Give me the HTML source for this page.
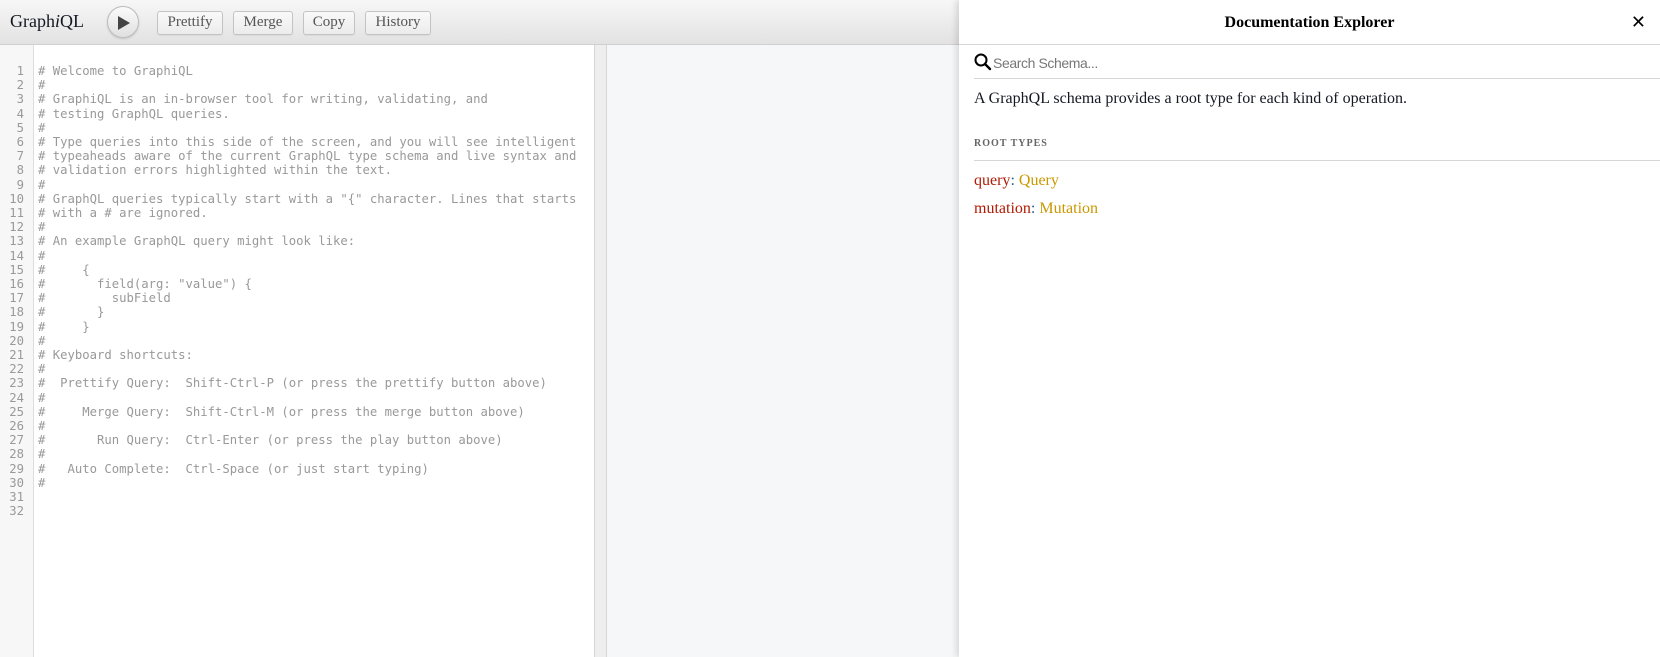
<!DOCTYPE html>
<html><head><meta charset="utf-8"><style>
*{box-sizing:border-box;margin:0;padding:0}
body{width:1660px;height:657px;overflow:hidden;font-family:"Liberation Serif",serif;background:#fff;position:relative}
.top{position:absolute;left:0;top:0;width:959px;height:45px;background:linear-gradient(#f7f7f7,#e2e2e2);border-bottom:1px solid #d0d0d0}
.title{position:absolute;left:10px;top:11px;font-size:18px;color:#141823}
.play{position:absolute;left:107px;top:6px;width:32px;height:32px;border-radius:50%;border:1px solid #bbb;background:linear-gradient(#fbfbfb,#e0e0e0);box-shadow:0 1px 2px rgba(0,0,0,.15)}
.play svg{position:absolute;left:9px;top:8px}
.btn{position:absolute;top:11px;height:24px;border:1px solid #c4c4c4;border-radius:3px;background:linear-gradient(#f9f9f9,#ececec);font-size:15px;color:#555;text-align:center;line-height:21px;box-shadow:0 1px 1px rgba(0,0,0,.06)}
.ed{position:absolute;left:0;top:45px;width:594px;height:612px;background:#fff}
.gut{position:absolute;left:0;top:0;width:34px;height:100%;background:#f7f7f7;border-right:1px solid #ddd}
pre{font-family:"DejaVu Sans Mono",monospace;font-size:12.25px;line-height:14.2px;color:#999}
.nums{position:absolute;left:0;top:19px;width:24px;text-align:right}
.code{position:absolute;left:38px;top:19px;color:#999}
.drag{position:absolute;left:594px;top:45px;width:13px;height:612px;background:#eee;border-left:1px solid #d6d6d6;border-right:1px solid #d6d6d6}
.res{position:absolute;left:607px;top:45px;width:352px;height:612px;background:#f6f7f8}
.doc{position:absolute;left:959px;top:0;width:701px;height:657px;background:#fff;box-shadow:-3px 0 6px rgba(0,0,0,.12)}
.dh{height:45px;border-bottom:1px solid #d6d6d6;text-align:center;font-weight:bold;font-size:16px;line-height:45px;color:#000}
.x{position:absolute;right:14px;top:12px;font-size:18px;font-family:"DejaVu Sans",sans-serif}
.search{position:absolute;left:15px;top:50px;width:686px;height:29px;border-bottom:1px solid #d6d6d6;font-size:14px;letter-spacing:-0.4px;color:#777;font-family:"Liberation Sans",sans-serif}
.search span{position:absolute;left:19px;top:5px}
.desc{position:absolute;left:15px;top:90px;font-size:16px;color:#141823}
.rt{position:absolute;left:15px;top:138px;width:686px;height:23px;border-bottom:1px solid #d6d6d6;font-size:10px;letter-spacing:1px;font-weight:bold;color:#666}
.f{position:absolute;left:15px;font-size:16px;color:#1f61a0}
.k{color:#b11a04}.t{color:#ca9800}
</style></head><body>
<div class="top">
<div class="title">Graph<i>i</i>QL</div>
<div class="play"><svg width="14" height="16" viewBox="0 0 14 16"><path d="M1 1 L13 8 L1 15 Z" fill="#444"/></svg></div>
<div class="btn" style="left:157px;width:66px">Prettify</div>
<div class="btn" style="left:233px;width:60px">Merge</div>
<div class="btn" style="left:303px;width:52px">Copy</div>
<div class="btn" style="left:365px;width:66px">History</div>
</div>
<div class="ed"><div class="gut"></div>
<pre class="nums">1
2
3
4
5
6
7
8
9
10
11
12
13
14
15
16
17
18
19
20
21
22
23
24
25
26
27
28
29
30
31
32</pre>
<pre class="code"># Welcome to GraphiQL
#
# GraphiQL is an in-browser tool for writing, validating, and
# testing GraphQL queries.
#
# Type queries into this side of the screen, and you will see intelligent
# typeaheads aware of the current GraphQL type schema and live syntax and
# validation errors highlighted within the text.
#
# GraphQL queries typically start with a "{" character. Lines that starts
# with a # are ignored.
#
# An example GraphQL query might look like:
#
#     {
#       field(arg: "value") {
#         subField
#       }
#     }
#
# Keyboard shortcuts:
#
#  Prettify Query:  Shift-Ctrl-P (or press the prettify button above)
#
#     Merge Query:  Shift-Ctrl-M (or press the merge button above)
#
#       Run Query:  Ctrl-Enter (or press the play button above)
#
#   Auto Complete:  Ctrl-Space (or just start typing)
#</pre></div>
<div class="drag"></div>
<div class="res"></div>
<div class="doc">
<div class="dh">Documentation Explorer</div>
<div class="x">✕</div>
<div class="search"><svg width="18" height="18" viewBox="0 0 18 18" style="position:absolute;left:0;top:3px"><circle cx="7" cy="7" r="5.5" fill="none" stroke="#000" stroke-width="2"/><path d="M11 11 L16 16" stroke="#000" stroke-width="2.4" stroke-linecap="round"/></svg><span>Search Schema...</span></div>
<div class="desc">A GraphQL schema provides a root type for each kind of operation.</div>
<div class="rt">ROOT TYPES</div>
<div class="f" style="top:172px"><span class="k">query</span>: <span class="t">Query</span></div>
<div class="f" style="top:200px"><span class="k">mutation</span>: <span class="t">Mutation</span></div>
</div>
</body></html>
